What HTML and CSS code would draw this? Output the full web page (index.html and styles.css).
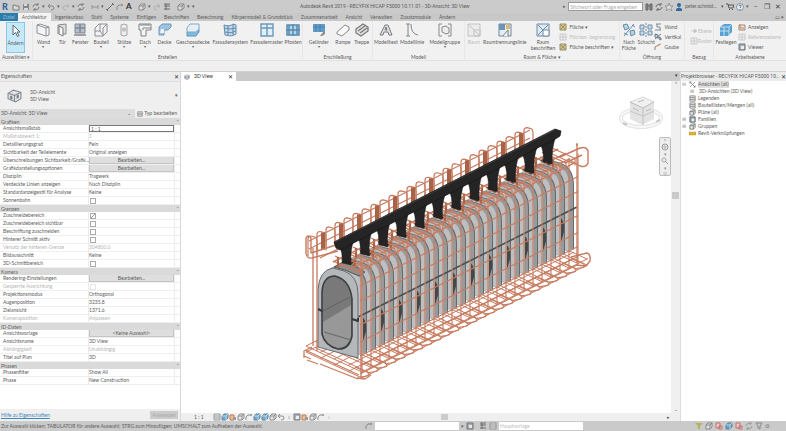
FILE: index.html
```html
<!DOCTYPE html>
<html lang="de">
<head>
<meta charset="utf-8">
<title>Autodesk Revit 2019</title>
<link rel="stylesheet" href="styles.css">
</head>
<body>
<svg class="defs" aria-hidden="true">
  <symbol id="cursor" viewBox="0 0 14 14"><path d="M4 1v10l2.500-2.500 2 4 1.500-.8-2-3.700h3z" fill="#fff" stroke="#555"/></symbol>
  <symbol id="wall" viewBox="0 0 14 14"><path d="M1 2l3-1 9 3v8l-3 1-9-3zM1 2l9 3v8M10 5l3-1" fill="#f6f6f6" stroke="#7c828a"/></symbol>
  <symbol id="door" viewBox="0 0 14 14"><path d="M3 2l8-1v10h-3M3 2v9" fill="#ddd" stroke="#777"/><path d="M4 3l4 2v8l-4-2z" fill="#f7f7f7" stroke="#666"/></symbol>
  <symbol id="window" viewBox="0 0 14 14"><path d="M2 1h10v9H2z" fill="#a7b7c9" stroke="#70757c"/><path d="M7 1v9M2 5h10M1 12h12" stroke="#70757c" stroke-width="1.500"/></symbol>
  <symbol id="part" viewBox="0 0 14 14"><path d="M1 5l4-4h8v8l-4 4H1zM6 1v7H1M6 8l3 4M9 5v8M9 5l4-4" fill="#f3f3f3" stroke="#7c7f84"/></symbol>
  <symbol id="column" viewBox="0 0 14 14"><path d="M4 2q3-2 6 0v10q-3 2-6 0z" fill="#eee" stroke="#999"/><path d="M5 5q2-1 4 0v3q-2 1-4 0z" fill="#bbb"/></symbol>
  <symbol id="roof" viewBox="0 0 14 14"><path d="M1 1h12v6H8v6H3V7H1z" fill="#f5f5f5" stroke="#6d7177"/><path d="M2 2h10M5 7V5h8" stroke="#6d7177" fill="none"/></symbol>
  <symbol id="ceil" viewBox="0 0 14 14"><path d="M1 4l3-3h9v3l-3 3H6v5H1z" fill="#8dbde2" stroke="#5d87aa"/><path d="M3 6h3v4H2z" fill="#f5f5f5"/></symbol>
  <symbol id="floor" viewBox="0 0 14 14"><path d="M1 9l3-3h9v3l-3 4H1z" fill="#69b3de" stroke="#4a86b0"/><path d="M4 1h9v5l-3 3H1V5z" fill="#e7eff5" stroke="#6c9cbc"/></symbol>
  <symbol id="facade" viewBox="0 0 14 14"><path d="M1 2q6 2 9-1l3 1v9q-4 3-11 1z" fill="#b8d5ea" stroke="#4c7ba1"/><path d="M1 5q6 2 12 0M2 9q6 2 11-1M5 2v10M10 1v11" fill="none" stroke="#4c7ba1"/></symbol>
  <symbol id="grid" viewBox="0 0 14 14"><path d="M1 1h12v12H1zM7 1v12M1 5h12" fill="#deeef8" stroke="#5689b0" stroke-width="1.400"/></symbol>
  <symbol id="mullion" viewBox="0 0 14 14"><path d="M1 2h12v10H1zM7 1v12M3 2v10M11 2v10M0 7h14" fill="#a9d1eb" stroke="#3f79a5" stroke-width="1.500"/></symbol>
  <symbol id="rail" viewBox="0 0 14 14"><path d="M1 1h12v8H1z" fill="#4a8fc4"/><path d="M1 4h12M4 1v8M8 1v8" stroke="#2f6da0"/><path d="M8 13l5-6v4l-3 2z" fill="#777"/></symbol>
  <symbol id="ramp" viewBox="0 0 14 14"><path d="M1 9l8-7 4 2v3l-7 6-5-2z" fill="#fafafa" stroke="#777"/></symbol>
  <symbol id="stair" viewBox="0 0 14 14"><path d="M1 6l7-5 5 3v4l-7 5-5-3zM3 8l7-5M5 10l7-5" fill="#ddd" stroke="#666" stroke-width="1.300"/></symbol>
  <symbol id="mtext" viewBox="0 0 14 14"><path d="M1 12L6 2h3l4 10h-3L9 9H5l-1 3z" fill="#ddd" stroke="#656a70"/><path d="M6 7h2L7 4z" fill="#fff" stroke="#656a70"/></symbol>
  <symbol id="mline" viewBox="0 0 14 14"><path d="M3 1v12M6 1q0 10 7 11M1 1h4M1 13h4" fill="none" stroke="#70757a"/></symbol>
  <symbol id="mgroup" viewBox="0 0 14 14"><path d="M4 1H1v12h3M10 1h3v12h-3" fill="none" stroke="#777"/><path d="M4 4l4-1 3 2v5l-3 1-4-2z" fill="#ececec" stroke="#777"/></symbol>
  <symbol id="room" viewBox="0 0 14 14"><path d="M1 1h12v12H1z" fill="#d9e8f4" stroke="#587c9c"/><path d="M2 2l10 10M2 12L12 2" stroke="#587c9c"/><path d="M7 7h6v6H7z" fill="#fff" stroke="#587c9c"/></symbol>
  <symbol id="roomgray" viewBox="0 0 14 14"><path d="M1 1h12v12H1zM1 1l12 12M7 7h6v6H7z" fill="#eaeaea" stroke="#bbb"/></symbol>
  <symbol id="roomsep" viewBox="0 0 14 14"><path d="M1 1h12v12H1z" fill="#e5edf3" stroke="#587894"/><path d="M1 1h6v6H1z" fill="#5485ad"/><path d="M8 2h4v4H8z" fill="#e1af5c"/><path d="M5 13l5-6v6" fill="#fff" stroke="#666"/></symbol>
  <symbol id="area" viewBox="0 0 8 8"><path d="M1 1h6v6H1z" fill="#d8bd67" stroke="#88815f"/><path d="M1 1l6 6M1 7l6-6" stroke="#88815f"/></symbol>
  <symbol id="areagray" viewBox="0 0 8 8"><path d="M1 1h6v6H1zM1 4h6M4 1v6" fill="#eee" stroke="#c4c4c4"/></symbol>
  <symbol id="byface" viewBox="0 0 14 14"><path d="M1 2l4-1 2 4-4 2zM8 8l4-1 1 4-4 2zM10 2l3 2M2 10l4 2M12 1L2 13" fill="#aed0e6" stroke="#4c7b9d"/></symbol>
  <symbol id="views" viewBox="0 0 8 8"><path d="M1 1l6 6M7 1L1 7M1 1h2M1 1v2M7 7H5M7 7V5" fill="none" stroke="#888"/></symbol>
  <symbol id="shaft" viewBox="0 0 14 14"><path d="M1 2h4v4H1zM9 2h4v4H9zM1 8h4v4H1zM9 8h4v4H9z" fill="#c2d9e7" stroke="#587f9a"/><path d="M7 0v14" stroke="#587f9a" stroke-dasharray="2 1"/></symbol>
  <symbol id="open1" viewBox="0 0 8 8"><path d="M2 1h5M3 1v3h3v3M1 7h6" fill="none" stroke="#678"/></symbol>
  <symbol id="open2" viewBox="0 0 8 8"><path d="M1 1l3 1v3L1 4zM5 4l2 1v2l-2-1zM1 6l6-5" fill="#bcd" stroke="#567"/></symbol>
  <symbol id="open3" viewBox="0 0 8 8"><path d="M1 7V4l5-3" fill="none" stroke="#777"/><path d="M3 3l4-2" stroke="#c85"/></symbol>
  <symbol id="plane" viewBox="0 0 14 14"><path d="M1 4l4-3h8v8l-4 4H1z" fill="#3f94cb"/><path d="M1 4h9v9M10 4l3-3M1 8h9M5 4v9" fill="none" stroke="#b9dcf0"/></symbol>
  <symbol id="show" viewBox="0 0 8 8"><path d="M1 2h6v5H1z" fill="#f4e2d3" stroke="#8d7b6b"/><path d="M2 1v4h4" fill="none" stroke="#c96d30"/></symbol>
  <symbol id="viewer" viewBox="0 0 8 8"><path d="M1 1h6v6H1z" fill="#9ba5ad" stroke="#596168"/><path d="M3 3h3v3H3z" fill="#eee"/></symbol>
  <symbol id="house" viewBox="0 0 14 14"><path d="M1 5l5-3 7 2v6l-5 3-7-3z" fill="#dfe3e7" stroke="#72777c"/><path d="M1 5l6 2v6M7 7l6-3" fill="none" stroke="#72777c"/><path d="M3 7l2 1v3l-2-1zM9 7l2-1v3l-2 1z" fill="#5c6670"/></symbol>
  <symbol id="folder" viewBox="0 0 8 8"><path d="M1 2h2l1 1h3v4H1z" fill="#ddd" stroke="#666"/></symbol>
  <symbol id="disk" viewBox="0 0 8 8"><path d="M1 1h6v6H1z" fill="#777"/><path d="M2 1h3v2H2zM2 5h4v2H2z" fill="#ddd"/></symbol>
  <symbol id="sync" viewBox="0 0 8 8"><path d="M1 4a3 3 0 0 1 5-2M7 4a3 3 0 0 1-5 2M6 0v2H4M2 8V6h2" fill="none" stroke="#666"/></symbol>
  <symbol id="undo" viewBox="0 0 8 8"><path d="M3 1L1 3l2 2M1 3h4q2 0 2 2t-3 2" fill="none" stroke="#777"/></symbol>
  <symbol id="redo" viewBox="0 0 8 8"><path d="M5 1l2 2-2 2M7 3H3Q1 3 1 5t3 2" fill="none" stroke="#aaa"/></symbol>
  <symbol id="measure" viewBox="0 0 8 8"><path d="M1 2v4M7 2v4M1 4h6" fill="none" stroke="#888"/></symbol>
  <symbol id="level" viewBox="0 0 8 8"><path d="M1 4h3M4 2v4l3-2z" fill="#bbb" stroke="#bbb" stroke-width=".6"/></symbol>
  <symbol id="dim" viewBox="0 0 8 8"><path d="M1 7l6-6M0 6l2 2M6 0l2 2" fill="none" stroke="#555"/></symbol>
  <symbol id="tag" viewBox="0 0 8 8"><path d="M1 7V4l2-2h4" fill="none" stroke="#777"/><circle cx="6" cy="2" r="1" fill="#888"/></symbol>
  <symbol id="box" viewBox="0 0 8 8"><path d="M1 3l2-2h4v4L5 7H1zM1 3h4v4M5 3l2-2" fill="#e5e8eb" stroke="#777"/></symbol>
  <symbol id="bluebox" viewBox="0 0 8 8"><path d="M1 3l2-2h4v4L5 7H1z" fill="#4998ca" stroke="#47718d"/><path d="M1 3h4v4M5 3l2-2" fill="none" stroke="#b7d8e9"/></symbol>
  <symbol id="sun" viewBox="0 0 8 8"><path d="M1 2h4v5H1z" fill="#f2b077" stroke="#b5632f"/><path d="M4 4h3v3H4z" fill="#888"/></symbol>
  <symbol id="lines" viewBox="0 0 8 8"><path d="M1 1h6v6H1zM1 3h6M1 5h6" fill="#eee" stroke="#888"/></symbol>
  <symbol id="thin" viewBox="0 0 8 8"><path d="M1 1h6M1 3h6M1 6h6M3 1v6" fill="none" stroke="#555"/></symbol>
  <symbol id="bin" viewBox="0 0 8 8"><path d="M1 1h2v6H1zM5 1h2v6H5zM3 3h2" fill="#888" stroke="#666"/></symbol>
  <symbol id="user" viewBox="0 0 8 8"><circle cx="4" cy="2" r="2" fill="#356a9c"/><path d="M1 8V6q3-3 6 0v2z" fill="#356a9c"/></symbol>
  <symbol id="star" viewBox="0 0 8 8"><path d="M4 0l1 3h3L6 5l1 3-3-2-3 2 1-3-2-2h3z" fill="#ddd" stroke="#777" stroke-width=".6"/></symbol>
  <symbol id="cart" viewBox="0 0 8 8"><path d="M0 1h2l1 4h4l1-3H2" fill="none" stroke="#555"/><path d="M3 6h1v1H3zM6 6h1v1H6z" fill="#555"/></symbol>
  <symbol id="help" viewBox="0 0 8 8"><circle cx="4" cy="4" r="3.500" fill="#e5edf3" stroke="#667d91" stroke-width=".7"/><path d="M3 3q0-1 1-1t1 1-1 2M4 6v1" fill="none" stroke="#456" stroke-width=".8"/></symbol>
  <symbol id="wheel" viewBox="0 0 8 8"><circle cx="4" cy="4" r="3" fill="#eee" stroke="#999"/><path d="M3 3h2v2H3z" fill="none" stroke="#aaa" stroke-width=".8"/></symbol>
  <symbol id="lens" viewBox="0 0 8 8"><circle cx="3" cy="3" r="2" fill="#eee" stroke="#999" stroke-width=".8"/><path d="M4 4l3 3" stroke="#999"/></symbol>
  <symbol id="funnel" viewBox="0 0 8 8"><path d="M1 1h6L5 4v3L3 6V4z" fill="none" stroke="#777"/></symbol>
  <symbol id="yfunnel" viewBox="0 0 8 8"><path d="M0 1h8L5 4v3H3V4z" fill="#b4ac45"/></symbol>
  <symbol id="redbox" viewBox="0 0 8 8"><path d="M1 1h4v5H1zM4 4h3v3H4z" fill="#eecaca" stroke="#bd5b55"/></symbol>
  <symbol id="link" viewBox="0 0 8 8"><path d="M0 2h8v4H0z" fill="#d0a72d"/><path d="M2 3h1v1H2zM5 3h1v1H5z" fill="#fff"/></symbol>
</svg>

<header class="titlebar">
  <div class="quick">
    <span class="logo">R</span>
    <svg><use href="#folder"/></svg><svg><use href="#disk"/></svg><svg class="dim"><use href="#sync"/></svg><i>▾</i>
    <svg><use href="#undo"/></svg><i>▾</i><svg><use href="#redo"/></svg><i>▾</i><svg><use href="#sync"/></svg>
    <svg class="gap"><use href="#measure"/></svg><i>▾</i><svg><use href="#dim"/></svg><svg><use href="#tag"/></svg><b>A</b>
    <svg class="gap"><use href="#box"/></svg><i>▾</i><svg class="dim"><use href="#redo"/></svg><svg><use href="#thin"/></svg>
    <svg class="gap"><use href="#box"/></svg><i>▾</i><i>▾</i>
  </div>
  <h1>Autodesk Revit 2019 - RECYFIX HICAP F5000 10.11.01 - 3D-Ansicht: 3D View</h1>
  <div class="account">
    <i>▸</i><input type="text" aria-label="Suche" placeholder="Stichwort oder Frage eingeben">
    <svg><use href="#bin"/></svg><svg><use href="#sync"/></svg><svg><use href="#star"/></svg><svg><use href="#user"/></svg>
    <span class="name">peter.schmid...</span><i>▾</i><svg><use href="#cart"/></svg><svg><use href="#help"/></svg><i>▾</i>
    <button aria-label="Minimieren">–</button><button aria-label="Verkleinern">❐</button><button aria-label="Beenden">✕</button>
  </div>
</header>

<nav class="tabs">
  <a class="file" href="#">Datei</a><a class="active" href="#">Architektur</a><a href="#">Ingenieurbau</a><a href="#">Stahl</a><a href="#">Systeme</a><a href="#">Einfügen</a><a href="#">Beschriften</a><a href="#">Berechnung</a><a href="#">Körpermodell &amp; Grundstück</a><a href="#">Zusammenarbeit</a><a href="#">Ansicht</a><a href="#">Verwalten</a><a href="#">Zusatzmodule</a><a href="#">Ändern</a>
  <span class="tabend">▭ ▾</span>
</nav>

<section class="ribbon">
  <div class="group select"><div class="tools"><button class="on"><svg><use href="#cursor"/></svg>Ändern</button></div><p>Auswählen ▾</p></div>
  <div class="group build"><div class="tools">
    <button><svg><use href="#wall"/></svg>Wand<i>▾</i></button><button><svg><use href="#door"/></svg>Tür</button><button><svg><use href="#window"/></svg>Fenster</button><button><svg><use href="#part"/></svg>Bauteil<i>▾</i></button><button><svg><use href="#column"/></svg>Stütze<i>▾</i></button><button><svg><use href="#roof"/></svg>Dach<i>▾</i></button><button><svg><use href="#ceil"/></svg>Decke</button><button><svg><use href="#floor"/></svg>Geschossdecke<i>▾</i></button><button><svg><use href="#facade"/></svg>Fassadensystem</button><button><svg><use href="#grid"/></svg>Fassadenraster</button><button><svg><use href="#mullion"/></svg>Pfosten</button>
  </div><p>Erstellen</p></div>
  <div class="group access"><div class="tools"><button><svg><use href="#rail"/></svg>Geländer<i>▾</i></button><button><svg><use href="#ramp"/></svg>Rampe</button><button><svg><use href="#stair"/></svg>Treppe</button></div><p>Erschließung</p></div>
  <div class="group modelling"><div class="tools"><button><svg><use href="#mtext"/></svg>Modelltext</button><button><svg><use href="#mline"/></svg>Modelllinie</button><button><svg><use href="#mgroup"/></svg>Modellgruppe<i>▾</i></button></div><p>Modell</p></div>
  <div class="group rooms"><div class="tools"><button disabled><svg><use href="#roomgray"/></svg>Raum</button><button><svg><use href="#roomsep"/></svg>Raumtrennungslinie</button><button><svg><use href="#room"/></svg>Raum<br>beschriften</button>
    <div class="stack"><button><svg><use href="#area"/></svg>Fläche ▾</button><button disabled><svg><use href="#areagray"/></svg>Flächen- begrenzung</button><button><svg><use href="#area"/></svg>Fläche beschriften ▾</button></div></div><p>Raum &amp; Fläche ▾</p></div>
  <div class="group opening"><div class="tools"><button><svg><use href="#byface"/></svg>Nach<br>Fläche</button><button><svg><use href="#shaft"/></svg>Schacht</button>
    <div class="stack"><button><svg><use href="#open1"/></svg>Wand</button><button><svg><use href="#open2"/></svg>Vertikal</button><button><svg><use href="#open3"/></svg>Gaube</button></div></div><p>Öffnung</p></div>
  <div class="group datum"><div class="tools"><div class="stack"><button disabled><svg><use href="#level"/></svg>Ebene</button><button disabled><svg><use href="#areagray"/></svg>Raster</button></div></div><p>Bezug</p></div>
  <div class="group plane"><div class="tools"><button><svg><use href="#plane"/></svg>Festlegen</button>
    <div class="stack"><button><svg><use href="#show"/></svg>Anzeigen</button><button disabled><svg><use href="#areagray"/></svg>Referenzebene</button><button><svg><use href="#viewer"/></svg>Viewer</button></div></div><p>Arbeitsebene</p></div>
</section>

<main>
  <aside class="props">
    <div class="head"><span>Eigenschaften</span><button aria-label="Eigenschaften schließen">✕</button></div>
    <div class="type"><svg><use href="#house"/></svg><span>3D-Ansicht<br>3D View</span><i>▾</i></div>
    <div class="filter"><span>3D-Ansicht: 3D View</span><i>⌄</i><button><svg><use href="#lines"/></svg>Typ bearbeiten</button></div>
    <div class="sheet">
    <table>
      <colgroup><col class="names"><col><col class="marks"></colgroup>
      <tr class="cat"><th colspan="2">Grafiken</th><td>⌃</td></tr>
      <tr><th>Ansichtsmaßstab</th><td><input type="text" aria-label="Ansichtsmaßstab" value="1 : 1"></td><td></td></tr>
      <tr class="off"><th>Maßstabswert 1:</th><td>1</td><td></td></tr>
      <tr><th>Detaillierungsgrad</th><td>Fein</td><td></td></tr>
      <tr><th>Sichtbarkeit der Teilelemente</th><td>Original anzeigen</td><td></td></tr>
      <tr><th>Überschreibungen Sichtbarkeit/Grafik...</th><td><button>Bearbeiten...</button></td><td></td></tr>
      <tr><th>Grafikdarstellungsoptionen</th><td><button>Bearbeiten...</button></td><td></td></tr>
      <tr><th>Disziplin</th><td>Tragwerk</td><td></td></tr>
      <tr><th>Verdeckte Linien anzeigen</th><td>Nach Disziplin</td><td></td></tr>
      <tr><th>Standardanzeigestil für Analyse</th><td>Keine</td><td></td></tr>
      <tr><th>Sonnenbahn</th><td><input type="checkbox" aria-label="Sonnenbahn"></td><td></td></tr>
      <tr class="cat"><th colspan="2">Grenzen</th><td>⌃</td></tr>
      <tr><th>Zuschneidebereich</th><td><input type="checkbox" aria-label="Zuschneidebereich" checked></td><td></td></tr>
      <tr><th>Zuschneidebereich sichtbar</th><td><input type="checkbox" aria-label="Zuschneidebereich sichtbar"></td><td></td></tr>
      <tr><th>Beschriftung zuschneiden</th><td><input type="checkbox" aria-label="Beschriftung zuschneiden"></td><td></td></tr>
      <tr><th>Hinterer Schnitt aktiv</th><td><input type="checkbox" aria-label="Hinterer Schnitt aktiv"></td><td></td></tr>
      <tr class="off"><th>Versatz der hinteren Grenze</th><td>304800.0</td><td></td></tr>
      <tr><th>Bildausschnitt</th><td>Keine</td><td></td></tr>
      <tr><th>3D-Schnittbereich</th><td><input type="checkbox" aria-label="3D-Schnittbereich"></td><td></td></tr>
      <tr class="cat"><th colspan="2">Kamera</th><td>⌃</td></tr>
      <tr><th>Rendering-Einstellungen</th><td><button>Bearbeiten...</button></td><td></td></tr>
      <tr class="off"><th>Gesperrte Ausrichtung</th><td><input class="faint" type="checkbox" aria-label="Gesperrte Ausrichtung" disabled></td><td></td></tr>
      <tr><th>Projektionsmodus</th><td>Orthogonal</td><td></td></tr>
      <tr><th>Augenposition</th><td>3235.8</td><td></td></tr>
      <tr><th>Zielansicht</th><td>1371.6</td><td></td></tr>
      <tr class="off"><th>Kameraposition</th><td>Anpassen</td><td></td></tr>
      <tr class="cat"><th colspan="2">ID-Daten</th><td>⌃</td></tr>
      <tr><th>Ansichtsvorlage</th><td><button>&lt;Keine Auswahl&gt;</button></td><td></td></tr>
      <tr><th>Ansichtsname</th><td>3D View</td><td></td></tr>
      <tr class="off"><th>Abhängigkeit</th><td>Unabhängig</td><td></td></tr>
      <tr><th>Titel auf Plan</th><td>3D</td><td></td></tr>
      <tr class="cat"><th colspan="2">Phasen</th><td>⌃</td></tr>
      <tr><th>Phasenfilter</th><td>Show All</td><td></td></tr>
      <tr><th>Phase</th><td>New Construction</td><td></td></tr>
    </table>
    </div>
    <div class="foot"><a href="#">Hilfe zu Eigenschaften</a><button disabled>Anwenden</button></div>
  </aside>

  <section class="view">
    <div class="viewtabs"><div class="viewtab"><svg><use href="#house"/></svg><span>3D View</span><button aria-label="Ansicht schließen">✕</button></div><div class="strip">▾</div></div>
    <div class="stage">
      <div class="canvas">
        <svg id="model" viewBox="181 81 490 332" role="img" aria-label="Rinne mit Bewehrungskorb"></svg>
        <svg class="cube" viewBox="0 0 46 38"><ellipse cx="23" cy="23" rx="20" ry="9" fill="none" stroke="#dedede" stroke-width="4"/><ellipse cx="23" cy="23" rx="20" ry="9" fill="none" stroke="#f7f7f7" stroke-width="2"/><path d="M12 7L25 2l11 5v17l-12 6-12-6z" fill="#ddd"/><path d="M12 7L25 2l11 5-11 6z" fill="#eee" stroke="#bbb" stroke-width=".6"/><path d="M12 7l13 6v17M36 7l-11 6M12 16l13 5 11-5" fill="none" stroke="#aaa" stroke-width=".8"/><path d="M20 7l6-2M15 13l6 3M28 16l5-2" stroke="#aaa"/><path d="M5 28l4 2M38 27l4-2" stroke="#bbb" stroke-width="2"/></svg>
        <div class="navbar"><i>×</i><svg><use href="#wheel"/></svg><i>▾</i><svg><use href="#lens"/></svg><i>▾</i><i>⊙</i></div>
      </div>
      <div class="vscroll"><i>⌃</i><b></b><i>⌄</i></div>
    </div>
    <div class="viewbar"><span>1 : 1</span><svg><use href="#lines"/></svg><svg><use href="#bluebox"/></svg><svg><use href="#sun"/></svg><svg><use href="#box"/></svg><svg><use href="#tag"/></svg><svg><use href="#bluebox"/></svg><svg><use href="#bluebox"/></svg><svg><use href="#box"/></svg><svg><use href="#undo"/></svg><i>♀</i><svg><use href="#viewer"/></svg><svg><use href="#sun"/></svg><svg><use href="#box"/></svg><svg><use href="#tag"/></svg><i>‹</i><b></b><i class="right">▸</i></div>
  </section>

  <aside class="browser">
    <div class="head"><span>Projektbrowser - RECYFIX HICAP F5000 10.1...</span><button aria-label="Projektbrowser schließen">✕</button></div>
    <ul>
      <li><i>⊟</i><svg><use href="#views"/></svg><span class="picked">Ansichten (all)</span></li>
      <li class="sub"><i>⊞</i><span>3D-Ansichten (3D View)</span></li>
      <li><i></i><svg><use href="#lines"/></svg><span>Legenden</span></li>
      <li><i></i><svg><use href="#lines"/></svg><span>Bauteillisten/Mengen (all)</span></li>
      <li><i></i><svg><use href="#box"/></svg><span>Pläne (all)</span></li>
      <li><i>⊞</i><svg><use href="#viewer"/></svg><span>Familien</span></li>
      <li><i>⊞</i><svg><use href="#box"/></svg><span>Gruppen</span></li>
      <li><i></i><svg><use href="#link"/></svg><span>Revit-Verknüpfungen</span></li>
    </ul>
  </aside>
</main>

<footer>
  <span class="hint">Zur Auswahl klicken; TABULATOR für andere Auswahl; STRG zum Hinzufügen; UMSCHALT zum Aufheben der Auswahl.</span>
  <div class="worksets"><svg><use href="#tag"/></svg><input type="text" aria-label="Bearbeitungsbereich"><i>▾</i><svg class="far"><use href="#viewer"/></svg><svg><use href="#thin"/></svg><svg><use href="#lines"/></svg><select aria-label="Variante"><option>Hauptvorlage</option></select></div>
  <div class="picks"><svg><use href="#yfunnel"/></svg><svg><use href="#box"/></svg><svg><use href="#redbox"/></svg><svg><use href="#bluebox"/></svg><svg><use href="#redbox"/></svg><svg class="dim"><use href="#sync"/></svg><svg><use href="#funnel"/></svg><i>:0</i></div>
</footer>
<script src="model.js"></script>
</body>
</html>
```
FILE: styles.css
```css
* { box-sizing: border-box; }
html, body { height: 100%; }
body { margin: 0; display: flex; flex-direction: column; overflow: hidden; background: #efefef; color: #5c5c5c; font: 5px/7px Lato, "Liberation Sans", sans-serif; }
button, input, select { font: inherit; color: inherit; margin: 0; padding: 0; border: 0; border-radius: 0; background: none; min-width: 0; }
button { cursor: pointer; white-space: nowrap; }
button:disabled { color: #bdbdbd; }
a { color: inherit; text-decoration: none; }
p, h1, ul { margin: 0; padding: 0; font-weight: 400; font-size: 5px; }
i { font-style: normal; }
svg { display: block; width: 8px; height: 8px; flex: none; }
.defs { position: absolute; width: 0; height: 0; }
.dim { opacity: .5; }

.titlebar { flex: none; height: 13px; display: grid; grid-template-columns: 300fr 263fr 223fr; align-items: center; background: #cbcbcb; }
.quick, .account { display: flex; align-items: center; gap: 2px; }
.quick b { font-size: 8px; color: #333; }
.quick .gap { margin-left: 4px; }
.logo { width: 10px; padding-left: 2px; font-size: 9px; font-weight: 900; color: #29679e; }
.quick svg { margin: 0; opacity: .8; }
.titlebar h1 { white-space: nowrap; line-height: 8px; font-family: Roboto, sans-serif; margin-top: -2px; }
.account { padding-right: 1px; }
.account input { width: 75px; height: 9px; background: #fff; border: 1px solid #999; padding-left: 1px; }
.account .name { width: 34px; white-space: nowrap; }
.account button { width: 9px; font-size: 7px; color: #444; }
.account input::placeholder { color: #aaa; }

.tabs { flex: none; height: 8px; display: flex; background: #c8c8c8; line-height: 9px; white-space: nowrap; }
.tabs a { padding: 0 4px; }
.tabs .file { background: #2a7cab; color: #93bfd9; padding: 0 3px; }
.tabs .active { background: #f4f4f4; }
.tabend { margin-left: auto; padding-right: 2px; }

.ribbon { flex: none; height: 50px; padding-bottom: 10px; display: grid; grid-template-columns: 33fr 270fr 70fr 92fr 155fr 65fr 29fr 72fr; background: linear-gradient(#f1f1f1 0 39px, #e2e2e2 39px 40px, #efefef 40px); }
.group { min-width: 0; display: flex; flex-direction: column; border-right: 1px solid #e7e7e7; text-align: center; }
.group:last-child { border: 0; }
.group p { line-height: 7px; white-space: nowrap; }
.tools { flex: 1; display: grid; }
.tools svg { opacity: .85; }
.tools > button { display: flex; flex-direction: column; align-items: center; justify-content: flex-start; padding-top: 2px; line-height: 6px; }
.tools > button > svg { width: 14px; height: 14px; margin-bottom: 2px; }
.tools > button i { line-height: 4px; font-size: 4px; }
.tools > .on { margin: 1px 7px 1px 6px; background: #c5e9f8; outline: 1px solid #8cc7df; outline-offset: -1px; }
.select p { text-align: left; padding-left: 2px; }
.build .tools { grid-template-columns: 21fr 17fr 19fr 23fr 23fr 19fr 20fr 37fr 38fr 35fr 18fr; }
.access .tools { grid-template-columns: 32fr 17fr 21fr; }
.modelling .tools { grid-template-columns: 26fr 27fr 39fr; }
.rooms .tools { grid-template-columns: 18fr 44fr 33fr 60fr; }
.opening .tools { grid-template-columns: 18fr 17fr 30fr; }
.datum .tools { padding-left: 5px; padding-top: 4px; }
.plane .tools { grid-template-columns: 24fr 48fr; }
.stack { display: flex; flex-direction: column; gap: 2px; padding-top: 2px; min-width: 0; }
.stack button { display: flex; align-items: center; gap: 2px; line-height: 8px; }
.datum .stack button { gap: 0; }

main { flex: 1; min-height: 0; display: grid; grid-template-columns: 181fr 499fr 106fr; border-top: 1px solid #d2d2d2; }
main > * { min-width: 0; min-height: 0; display: flex; flex-direction: column; }
.head { flex: none; height: 9px; display: flex; align-items: center; justify-content: space-between; padding: 0 1px; background: #ebebeb; white-space: nowrap; }
.head span { flex: 1; min-width: 0; overflow: hidden; text-overflow: ellipsis; }
.head button { flex: none; width: 6px; font-size: 6px; color: #333; }

.props { border-right: 1px solid #d8d8d8; background: #efefef; }
.type { flex: none; height: 28px; display: flex; align-items: center; gap: 8px; padding: 0 2px 0 7px; border-top: 1px solid #ddd; }
.type svg { width: 15px; height: 15px; opacity: .85; }
.type i { margin-left: auto; }
.filter { flex: none; height: 9px; display: flex; align-items: center; background: #dcdcdc; padding-left: 1px; }
.filter i { margin-left: auto; padding-right: 4px; }
.filter button { display: flex; align-items: center; gap: 1px; height: 9px; padding: 0 3px 0 2px; background: #efefef; }
.filter svg { width: 6px; height: 6px; }
.sheet { flex: 1; min-height: 0; background: #fff; }
table { width: 100%; border-collapse: separate; border-spacing: 0; table-layout: fixed; line-height: 7px; }
.names { width: 88px; }
.marks { width: 6px; }
tr { height: 8px; }
.cat { height: 7px; background: #dadada; line-height: 6px; }
th, td { padding: 0; text-align: left; font-weight: 400; white-space: nowrap; }
th { padding-left: 3px; }
td { border-left: 1px solid #ececec; }
tr:not(.cat) > * { border-bottom: 1px solid #efefef; }
.cat th { padding-left: 1px; }
td:last-child { text-align: center; font-size: 4px; }
.cat td:last-child { border: 0; }
.off { color: #b5b5b5; }
td button { display: block; width: 100%; height: 7px; line-height: 6px; background: #dedede; border: 1px solid #c4c4c4; border-top: 0; }
td input[type=text] { display: block; width: 100%; height: 7px; border: 1px solid #777; padding-left: 1px; line-height: 5px; }
td input[type=checkbox] { appearance: none; display: block; width: 6px; height: 6px; margin-left: 1px; border: 1px solid #aaa; background: #fff; }
td input[type=checkbox]:checked { background: linear-gradient(135deg, #fff 45%, #999 45% 60%, #fff 60%); }
td input.faint { border-color: #e6e6e6; }
.foot { flex: none; height: 12px; display: flex; align-items: center; justify-content: space-between; padding: 0 2px 0 1px; }
.foot a { color: #4388bd; text-decoration: underline; }
.foot button { width: 28px; height: 8px; background: #cbcbcb; color: #aaa; }

.viewtabs { flex: none; height: 9px; display: flex; background: #fff; }
.viewtab { width: 55px; display: flex; align-items: center; gap: 4px; padding: 0 3px; }
.viewtab svg { width: 6px; height: 6px; }
.viewtab button, .viewtab span { color: #333; }
.viewtab button { margin-left: auto; font-size: 6px; }
.strip { flex: 1; background: #c9c9c9; text-align: right; padding-right: 2px; color: #333; }
.stage { flex: 1; min-height: 0; display: flex; background: #fff; }
.canvas { flex: 1; min-width: 0; position: relative; }
#model { width: 100%; height: 100%; }
.cube { position: absolute; right: 7px; top: 14px; width: 46px; height: 38px; opacity: .8; }
.navbar { position: absolute; right: 0; top: 56px; width: 12px; height: 39px; border: 1px solid #bbb; border-radius: 2px; background: #eee; color: #999; display: flex; flex-direction: column; align-items: center; justify-content: space-between; line-height: 4px; }
.vscroll { flex: none; width: 9px; display: flex; flex-direction: column; align-items: center; background: #f0f0f0; }
.vscroll b { width: 7px; height: 7px; background: #c9c9c9; margin: 104px 0 auto; }
.viewbar { flex: none; height: 8px; display: flex; align-items: center; background: #efefef; padding-left: 13px; }
.viewbar svg { opacity: .8; }
.viewbar span { width: 19px; }
.viewbar i { width: 8px; text-align: center; }
.viewbar b { width: 7px; height: 6px; background: #ccc; margin-left: 108px; }
.viewbar .right { margin-left: auto; margin-right: 8px; }

.browser { background: #fff; border-left: 1px solid #ddd; }
.browser ul { list-style: none; }
.browser li { display: flex; align-items: center; height: 7px; gap: 2px; white-space: nowrap; padding-left: 1px; }
.browser li i { width: 5px; color: #999; }
.browser li svg { width: 7px; height: 7px; }
.browser .head { font-family: Roboto, sans-serif; padding: 0; }
.browser .sub { padding-left: 9px; gap: 4px; }
.browser .picked { background: #e0e0e0; }

footer { flex: none; height: 10px; display: grid; grid-template-columns: 365fr 330fr 91fr; align-items: center; background: #cacaca; }
footer > * { min-width: 0; white-space: nowrap; }
footer svg { opacity: .8; }
.hint { padding-left: 1px; }
.worksets, .picks { display: flex; align-items: center; gap: 2px; }
.worksets input { width: 84px; height: 8px; background: #fff; }
.worksets select { appearance: none; width: 84px; height: 8px; background: #fff; color: #bbb; padding-left: 1px; }
.worksets .far { margin-right: 3px; }
```
FILE: model.js
```javascript
// Isometric channel with its reinforcement cage, built from repeated sections.
const out = [];
const K = -0.502;
const add = (d, fill, stroke, w) =>
  out.push(`<path d="${d}" fill="${fill}" stroke="${stroke}" stroke-width="${w}" stroke-linejoin="round"/>`);
const run = (x, y, len) => `M${x} ${y}l${len} ${len * K}`;
const moved = (u, body) => out.push(`<g transform="translate(${u} ${u * K})">${body}</g>`);
const STEEL = '#c77b5f', DARK = '#a86248';

// rear row of hooks
let d = run(309, 241, 221) + run(309, 249, 221) + run(320, 258, 210);
add(d, 'none', STEEL, 1.2);
for (let i = 0; i < 25; i++) {
  const x = 308 + i * 9, y = 236 + i * 9 * K;
  add(`M${x} ${y + 20}V${y + 3}q0-3 3-3l4 1q2 1 2 4v14`, 'none', STEEL, 1.2);
  if (i % 2) add(`M${x + 6} ${y + 1}v17`, 'none', DARK, 4);
}
add('M306 238v15q1 6 6 5l26-7M306 238q2-4 5 0v15l25-8', 'none', STEEL, 1.4);

// bottom mat
for (let layer = 0; layer < 2; layer++) {
  d = '';
  for (let t = 0; t <= 4; t++) d += run(306 + t * 14, 346 + t * 6.5 + layer * 6, 226);
  for (let i = 0; i <= 25; i++) d += `M${306 + i * 9} ${346 + layer * 6 + i * 9 * K}l56 26`;
  add(d, 'none', STEEL, 1);
}

// channel sections, far to near
const profile = 'M318 347V290Q319 270 333 268L344 271Q358 276 358 294V358Z';
for (let i = 24; i >= 1; i--) {
  moved(i * 9, `<path d="${profile}" fill="#66696a"/>`);
  moved(i * 9 - 1, `<path d="${profile}" fill="#989b9c"/>`);
  moved(i * 9 - 4, `<path d="${profile}" fill="#bdbfc0" stroke="#8d9091" stroke-width=".5"/>`);
  if (i % 2) moved(i * 9 - 4, '<path d="M358 320q4 4 3 14l-3 10z" fill="#454849"/>');
}
add(run(358, 317, 219), 'none', '#4c4e50', 1.6);
add(profile, '#b4b8ba', '#696c6e', 1);
add('M334 267l11 3 14 6 6-4-14-8-8-2z', '#8c8f90', '#555', 1);
add('M322 334V292Q323 276 335 276Q350 280 352 299V336Q349 350 338 349Q325 346 322 334Z', '#797979', '#3d4042', 1.6);
add('M323 322l28-17v31q-3 12-13 12-12-3-15-14z', '#989898', 'none', 0);
add('M323 311l27-14M324 332l27 8', 'none', '#5b5b5b', .8);
add('M318 309l4 2M352 319l6 2v-3', 'none', '#35383a', 2);

// top lattice and anchors
for (let i = 0; i < 25; i++) {
  const x = 333 + i * 9, y = 261 + i * 9 * K;
  if (x < 556) add(`M${x} ${y}l24 11M${x + 2} ${y - 5}l24 11v7`, 'none', STEEL, 1.2);
  if (i % 2 === 0 && x < 545) {
    add(`M${x + 9} ${y - 1}l6-3 8 4-5 4z`, '#454545', DARK, .8);
    add(`M${x + 5} ${y - 4}v11M${x + 22} ${y - 3}v10`, 'none', DARK, 2.2);
  }
}
add(run(333, 262, 225) + run(341, 266, 225) + run(350, 269, 220) + run(357, 272, 218), 'none', STEEL, 1.4);

// black mounting rail
for (let i = 0; i < 12; i++) {
  const x = 347 + i * 18.3, y = 237 + i * 18.3 * K;
  add(`M${x - 9} ${y + 7}Q${x - 4} ${y + 14} ${x - 5} ${y + 26}l9 2Q${x + 3} ${y + 11} ${x + 8} ${y}z`, '#242424', '#191919', .4);
}
add('M334 242L555 129l6 2-1 5-3 2L340 250l-4-2z', '#252525', '#171717', .7);
add('M335 242L555 130', 'none', '#444', .8);

// front mesh
d = '';
for (let i = 0; i < 25; i++) d += `M${362 + i * 9} ${262 + i * 9 * K}V${373 + i * 9 * K}`;
for (const y of [286, 301, 325, 342, 356, 366, 374]) d += run(360, y, 218);
add(d, 'none', STEEL, 1.1);
for (let i = 0; i < 25; i++) {
  const x = 362 + i * 9, y = 372 + i * 9 * K;
  add(`M${x - 7} ${y - 5}l12 5q4 3 0 4l-7 1`, 'none', STEEL, 1.1);
}
add('M317 246V351M313 248V346M305 350l54 25M304 358v-7l8-4M307 360l11 4M304 356l7 3M357 378l8 1 6-4M320 364l38 15M361 258V377M577 143V263', 'none', STEEL, 1.3);
add('M560 157l20-9q6-2 8 3v12q-2 5-8 3l-9-5M565 163l17-8M577 146v-2M571 257l16-4q4 1 3 8l-4 5-10-1', 'none', STEEL, 1.4);
document.getElementById('model').innerHTML = out.join('');
```
